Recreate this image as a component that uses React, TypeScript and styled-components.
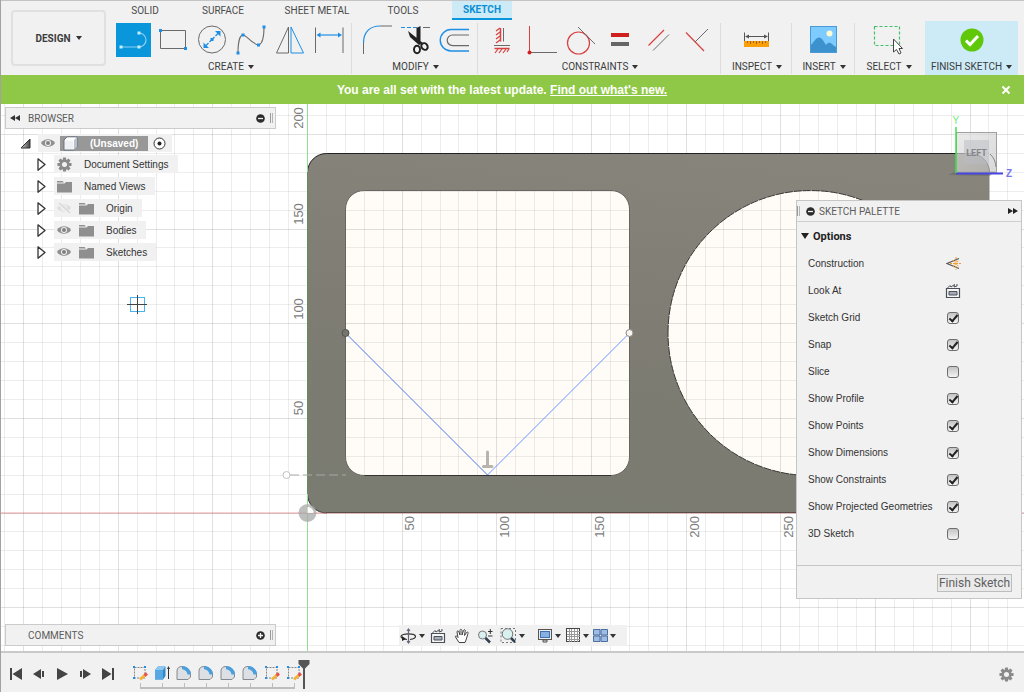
import React from "react";
import styled, { createGlobalStyle, css } from "styled-components";

const ui = `"Liberation Sans", Arial, sans-serif`;
const caps = `Roboto, "Liberation Sans", Arial, sans-serif`;

const GlobalStyle = createGlobalStyle`
  *, *::before, *::after { box-sizing: border-box; }
  html, body { margin: 0; padding: 0; }
  body { font-family: ${ui}; font-size: 10px; color: #3c3c3c; background: #f1f1f1; overflow: hidden; }
  button, input { font: inherit; color: inherit; margin: 0; }
  button { background: none; border: 0; padding: 0; cursor: pointer; }
  svg { display: block; }
`;

const Shell = styled.div`
  display: flex;
  flex-direction: column;
  height: 100vh;
  border-left: 1px solid #a2a2a2;
  overflow: hidden;
`;

/* ---------- ribbon ---------- */

const Ribbon = styled.header`
  display: flex;
  flex: none;
  height: 75px;
  padding-right: 6px;
  border-top: 1px solid #c4c4c4;
  background: #f1f1f1;
  font-family: ${caps};
  font-size: 10px;
`;

const DesignButton = styled.button`
  display: flex;
  align-items: center;
  justify-content: center;
  gap: 5px;
  flex: none;
  width: 95px;
  height: 56px;
  margin: 9px 8px 0 10px;
  border: 2px solid #e0e0e0;
  border-radius: 4px;
  font-weight: bold;
  color: #3c3c3c;
`;

const RibbonBody = styled.div`
  display: flex;
  flex-direction: column;
  flex: 1;
  min-width: 0;
`;

const Tabs = styled.nav`
  display: flex;
  height: 19px;
`;

const Tab = styled.button<{ $width: number; $active?: boolean }>`
  width: ${(p) => p.$width}px;
  flex: none;
  line-height: 20px;
  text-align: center;
  color: #4a4a4a;
  ${(p) =>
    p.$active &&
    css`
      margin-left: 10px;
      background: #cdeaf7;
      color: #0a8fd6;
      font-weight: bold;
      border-bottom: 2px solid #0a96dc;
      line-height: 17px;
    `}
`;

const Groups = styled.div`
  display: flex;
  flex: 1;
`;

const Group = styled.section<{ $width?: number }>`
  display: flex;
  flex-direction: column;
  align-items: center;
  justify-content: space-between;
  flex: none;
  width: ${(p) => (p.$width ? `${p.$width}px` : "auto")};
  margin: 3px 0 1px;
  padding: 0 3px 0 5px;
  border-right: 1px solid #dcdcdc;
  &:first-child {
    padding-left: 0;
  }
  &:last-child {
    border-right: 0;
  }
`;

const Tools = styled.div`
  display: flex;
`;

const Tool = styled.button<{ $active?: boolean }>`
  display: flex;
  align-items: center;
  justify-content: center;
  width: 35px;
  height: 34px;
  margin: 0 2px;
  background: ${(p) => (p.$active ? "#0996db" : "none")};
`;

const GroupLabel = styled.button`
  display: flex;
  align-items: center;
  gap: 4px;
  height: 14px;
  line-height: 14px;
  white-space: nowrap;
  color: #3c3c3c;
`;

const FinishGroup = styled.button`
  display: flex;
  flex-direction: column;
  align-items: center;
  justify-content: space-between;
  flex: none;
  width: 93px;
  margin: 20px 0 0 auto;
  padding: 7px 0 1px;
  background: #cdeaf7;
`;

const CaretShape = styled.span`
  display: inline-block;
  flex: none;
  border: 3px solid transparent;
  border-top: 4px solid #333;
  border-bottom: 0;
`;

const Banner = styled.div`
  display: flex;
  align-items: center;
  justify-content: center;
  flex: none;
  height: 29px;
  padding: 0 13px 0 22px;
  background: #8fc846;
  color: #fff;
  font-size: 12px;
  font-weight: bold;
`;

const BannerText = styled.p`
  flex: 1;
  margin: 0;
  text-align: center;
  padding-right: 20px;
`;

const BannerLink = styled.a`
  color: #fff;
`;

/* ---------- workspace ---------- */

const Workspace = styled.main`
  position: relative;
  flex: 1;
  min-height: 0;
  background: #fff;
  overflow: hidden;
`;

const Drawing = styled.svg`
  position: absolute;
  inset: 0;
  width: 100%;
  height: 100%;
`;

const Dock = styled.div`
  position: absolute;
  left: 4px;
  top: 3px;
  bottom: 5px;
  width: 271px;
  display: flex;
  flex-direction: column;
  justify-content: space-between;
`;

const PanelBar = styled.div`
  display: flex;
  align-items: center;
  height: 22px;
  padding: 0 2px 0 4px;
  border: 1px solid #cbcbcb;
  background: #f1f1f1;
`;

const PanelTitle = styled.h2<{ $indent: number }>`
  flex: 1;
  margin: 0;
  padding-left: ${(p) => p.$indent}px;
  font-family: ${caps};
  font-size: 10px;
  font-weight: normal;
  color: #5c5c5c;
`;

const Grip = styled.span`
  width: 3px;
  height: 10px;
  margin-left: 5px;
  border-left: 1px solid #999;
  border-right: 1px solid #b4b4b4;
`;

const Tree = styled.ul`
  list-style: none;
  margin: 5px 0 0;
  padding: 0;
`;

const TreeItem = styled.li<{ $root?: boolean }>`
  display: flex;
  align-items: center;
  gap: ${(p) => (p.$root ? 7 : 8)}px;
  height: 18px;
  margin-bottom: ${(p) => (p.$root ? 3 : 4)}px;
  padding-left: ${(p) => (p.$root ? 15 : 32)}px;
`;

const TreeBody = styled.div<{ $root?: boolean }>`
  display: flex;
  align-items: center;
  gap: ${(p) => (p.$root ? 5 : 8)}px;
  height: 18px;
  padding: 0 ${(p) => (p.$root ? 6 : 9)}px 0 3px;
  background: #f1f1f1;
`;

const TreeLabel = styled.span`
  margin-left: 4px;
  color: #333;
`;

const RootLabel = styled.span`
  display: flex;
  align-items: center;
  gap: 12px;
  height: 15px;
  width: 88px;
  padding-left: 3px;
  background: #989898;
  color: #fff;
  font-weight: bold;
`;

const Palette = styled.aside`
  position: absolute;
  top: 96px;
  right: 2px;
  width: 226px;
  border: 1px solid #c6c6c6;
  background: #f1f1f1;
`;

const PaletteHead = styled.div`
  display: flex;
  align-items: center;
  height: 21px;
  padding: 0 3px 0 0;
  border-bottom: 1px solid #cfcfcf;
`;

const PaletteGrip = styled(Grip)`
  margin: 0 6px 0 0;
`;

const OptionsTitle = styled.h3`
  display: flex;
  align-items: center;
  gap: 4px;
  height: 28px;
  margin: 0;
  padding-left: 4px;
  font-family: ${caps};
  font-size: 11px;
  color: #222;
`;

const BigCaret = styled.span`
  border: 4px solid transparent;
  border-top: 6px solid #222;
  border-bottom: 0;
`;

const Options = styled.div`
  padding-bottom: 18px;
`;

const OptionRow = styled.label`
  display: flex;
  align-items: center;
  height: 27px;
  padding-left: 11px;
  color: #333;
`;

const OptionName = styled.span`
  width: 136px;
`;

const OptionSlot = styled.span`
  display: flex;
  justify-content: center;
  width: 18px;
`;

const IconButton = styled.button`
  display: flex;
  align-items: center;
  justify-content: center;
`;

const Check = styled.input`
  appearance: none;
  display: grid;
  place-items: center;
  width: 12px;
  height: 12px;
  border: 1px solid #6d6d6d;
  border-radius: 3px;
  background: linear-gradient(#c4c4c4, #f3f3f3);
  &:checked::before {
    content: "";
    width: 5px;
    height: 9px;
    border: solid #222;
    border-width: 0 2px 2px 0;
    transform: rotate(40deg);
  }
`;

const PaletteFoot = styled.div`
  display: flex;
  align-items: center;
  justify-content: flex-end;
  height: 33px;
  padding: 1px 9px 0;
  border-top: 1px solid #c6c6c6;
`;

const FinishButton = styled.button`
  height: 18px;
  width: 75px;
  border: 1px solid #bdbdbd;
  background: #eaeaea;
  color: #5f5f5f;
  font-family: ${caps};
  font-size: 12px;
  line-height: 16px;
  white-space: nowrap;
`;

const NavBar = styled.div`
  position: absolute;
  left: 398px;
  bottom: 5px;
  display: flex;
  align-items: center;
  height: 21px;
  width: 228px;
  padding-left: 1px;
  background: #f1f1f1;
`;

const NavItem = styled.button<{ $width: number }>`
  display: flex;
  align-items: center;
  gap: 2px;
  flex: none;
  width: ${(p) => p.$width}px;
`;

/* ---------- timeline ---------- */

const Timeline = styled.footer`
  display: flex;
  flex: none;
  align-items: center;
  height: 41px;
  padding: 0 10px 0 8px;
  border-top: 2px solid #c9c9c9;
  background: #f1f1f1;
`;

const Playback = styled.div`
  display: flex;
  align-items: center;
  gap: 9px;
  margin: 3px 14px 0 0;
`;

const Features = styled.ol`
  display: flex;
  list-style: none;
  margin: 9px 0 0;
  padding: 0;
`;

const Feature = styled.li`
  display: flex;
  flex-direction: column;
  align-items: center;
  width: 22px;
  & > span {
    width: 100%;
    height: 6px;
    margin-top: 2px;
    background:
      linear-gradient(#bdbdbd, #bdbdbd) center / 1px 100% no-repeat,
      linear-gradient(#bdbdbd, #bdbdbd) bottom / 100% 2px no-repeat;
  }
  &:first-child > span {
    background:
      linear-gradient(#bdbdbd, #bdbdbd) center / 1px 100% no-repeat,
      linear-gradient(#bdbdbd, #bdbdbd) bottom right / 50% 2px no-repeat;
  }
  &:last-child > span {
    background:
      linear-gradient(#bdbdbd, #bdbdbd) center / 1px 100% no-repeat,
      linear-gradient(#bdbdbd, #bdbdbd) bottom left / 50% 2px no-repeat;
  }
`;

const MarkerButton = styled.button`
  margin: 4px 0 0 -7px;
`;

const SettingsButton = styled.button`
  margin: 3px 0 0 auto;
`;

/* ---------- icons ---------- */

const B = "#1e8fe6";
const G = "#6a6a6a";
const R = "#d94040";

const Dot = ({ x, y, c = B }: { x: number; y: number; c?: string }) => (
  <rect x={x - 1.5} y={y - 1.5} width="3" height="3" fill={c} />
);

const Icon34 = ({ children }: { children: React.ReactNode }) => (
  <svg width="34" height="34" viewBox="0 0 34 34" fill="none" aria-hidden="true">
    {children}
  </svg>
);

const LineIcon = () => (
  <Icon34>
    <path d="M4 24H22A7 7 0 0 0 22 10" stroke="#8fd0f2" strokeWidth="1.200" />
    <Dot x={4} y={24} c="#c9ecff" />
    <Dot x={22} y={24} c="#c9ecff" />
    <Dot x={22} y={10} c="#c9ecff" />
  </Icon34>
);
const RectIcon = () => (
  <Icon34>
    <path d="M4.500 7.500H29.500V25.500H4.500Z" stroke={G} />
    <Dot x={4.5} y={7.5} />
    <Dot x={29.5} y={25.5} />
  </Icon34>
);
const CircleIcon = () => (
  <Icon34>
    <circle cx="17" cy="16.500" r="13.500" stroke={G} />
    <path d="M10.500 23 23.500 10" stroke={B} strokeWidth="1.200" />
    <path d="M8.500 25v-5.500l5.500 5.500zM25.500 8v5.500l-5.500-5.500z" fill={B} />
    <path d="M12 17.500l4 4M18 11.500l4 4" stroke="#f1f1f1" strokeWidth="1.500" />
    <Dot x={17} y={16.5} />
  </Icon34>
);
const SplineIcon = () => (
  <Icon34>
    <path d="M4 30C4 19 6 12 9 12C13 12 17 21 25 22C29 20 30 12 30 4" stroke={G} strokeWidth="1.100" />
    <Dot x={4} y={30} />
    <Dot x={9} y={12} />
    <Dot x={24.5} y={22} />
    <Dot x={30} y={4} />
  </Icon34>
);
const MirrorIcon = () => (
  <Icon34>
    <path d="M15.500 4V30H3.500Z" stroke={G} />
    <path d="M18 4V30H30.500Z" stroke={B} />
  </Icon34>
);
const DimensionIcon = () => (
  <Icon34>
    <path d="M3.500 4.500V30M31 4.500V30" stroke={G} />
    <path d="M6 12H28" stroke={B} strokeWidth="1.200" />
    <path d="M4.500 12l4-2.500v5zM30 12l-4-2.500v5z" fill={B} />
  </Icon34>
);
const FilletIcon = () => (
  <Icon34>
    <path d="M3.500 20C3.500 9 10 3 20 3" stroke={B} strokeWidth="1.200" />
    <path d="M3.500 20V31M20 3H32" stroke={G} />
  </Icon34>
);
const TrimIcon = () => (
  <Icon34>
    <path d="M2 4.500H18" stroke={B} strokeDasharray="4 2" />
    <path d="M24 4.500H31" stroke={G} />
    <path d="M17.500 5L21.500 3V22L17.500 18ZM9 8L24 20L20 22L11 14Z" fill="#222" />
    <ellipse cx="18" cy="26.500" rx="3" ry="3.800" stroke="#222" strokeWidth="2" />
    <ellipse cx="25.500" cy="23.500" rx="3" ry="3.500" stroke="#222" strokeWidth="2" transform="rotate(-40 25.500 23.500)" />
  </Icon34>
);
const OffsetIcon = () => (
  <Icon34>
    <path d="M31 6.500H13A10 10 0 0 0 13 28H31" stroke={B} strokeWidth="1.400" />
    <path d="M31 12H14.500A5.300 5.300 0 0 0 14.500 22.600H31" stroke={G} strokeWidth="1.200" />
  </Icon34>
);
const FixIcon = () => (
  <Icon34>
    <path d="M14.500 5V18.500" stroke={R} strokeWidth="1.500" />
    <path d="M10 8l4-3M10 12l4-3M10 16l4-3M10 20l4-3" stroke={R} strokeWidth="1.200" />
    <path d="M17.500 5V18.500" stroke={G} />
    <path d="M8 22.500H24" stroke={G} />
    <path d="M8.500 25.500H23.500" stroke={R} strokeWidth="1.500" />
    <path d="M9 30l3-4M13 30l3-4M17 30l3-4M21 29l2-3" stroke={R} strokeWidth="1.200" />
  </Icon34>
);
const PerpendicularIcon = () => (
  <Icon34>
    <path d="M4.500 3V29" stroke={R} />
    <path d="M4.500 29.500H32" stroke={G} />
    <circle cx="4.500" cy="29.500" r="2" fill="#d32020" />
  </Icon34>
);
const TangentIcon = () => (
  <Icon34>
    <circle cx="14.500" cy="20" r="11" stroke={R} strokeWidth="1.200" />
    <path d="M14 4L31 21" stroke={G} />
  </Icon34>
);
const EqualIcon = () => (
  <Icon34>
    <rect x="8" y="10" width="18" height="4" fill="#d01f1f" />
    <rect x="8" y="19" width="18" height="4" fill="#666" />
  </Icon34>
);
const ParallelIcon = () => (
  <Icon34>
    <path d="M6.500 22.500L22 7" stroke={R} strokeWidth="1.200" />
    <path d="M11 27.500L27 11.500" stroke={G} />
  </Icon34>
);
const MidpointIcon = () => (
  <Icon34>
    <path d="M5 9.500L23 28" stroke={R} strokeWidth="1.200" />
    <path d="M14 19L27 6" stroke={G} />
  </Icon34>
);
const MeasureIcon = () => (
  <Icon34>
    <path d="M4.500 9.500V19M28.500 9.500V19M6 13.500H27" stroke="#555" />
    <path d="M5 13.500l4-2v4zM28 13.500l-4-2v4z" fill="#555" />
    <rect x="4" y="18" width="25" height="6" fill="#fb9f06" />
    <path d="M7.500 18v2M10.500 18v3M13.500 18v2M16.500 18v3M19.500 18v2M22.500 18v3M25.500 18v2" stroke="#9a6410" />
  </Icon34>
);
const ImageIcon = () => (
  <Icon34>
    <rect x="3.500" y="3.500" width="26" height="26" fill="#7dcbff" stroke="#4a9ad6" />
    <path d="M4 22C7 19 9 14.500 12 14.500C15 14.500 17 19 19 22C21 19 23 19.500 25 21C27 23 28 23.500 29 24V29H4Z" fill="#3d91cd" />
    <circle cx="22.500" cy="10.500" r="3" fill="#fdfbd0" />
  </Icon34>
);
const SelectIcon = () => (
  <Icon34>
    <rect x="2.500" y="3.500" width="25" height="19" stroke="#42c06b" strokeDasharray="3 2" strokeWidth="1.200" />
    <path d="M21.500 16V29L24.500 26.500L27 31L29 30L27 25.500H30.500Z" fill="#fff" stroke="#444" />
  </Icon34>
);
const DoneIcon = () => (
  <svg width="24" height="24" viewBox="0 0 24 24" aria-hidden="true">
    <circle cx="12" cy="12" r="11.500" fill="#5fc80a" />
    <path d="M6 12.500l4 4 8-8.500" fill="none" stroke="#fff" strokeWidth="3" />
  </svg>
);

const Rewind = () => (
  <svg width="10" height="8" viewBox="0 0 10 8" aria-hidden="true">
    <path d="M5 1v6L0 4zM10 1v6L5 4z" fill="#333" />
  </svg>
);
const Forward = () => (
  <svg width="10" height="8" viewBox="0 0 10 8" aria-hidden="true">
    <path d="M0 1v6l5-3zM5 1v6l5-3z" fill="#222" />
  </svg>
);
const Disc = ({ plus }: { plus?: boolean }) => (
  <svg width="9" height="9" viewBox="0 0 9 9" aria-hidden="true">
    <circle cx="4.500" cy="4.500" r="4.300" fill="#2c2c2c" />
    <path d={plus ? "M2 4.500H7M4.500 2V7" : "M2 4.500H7"} stroke="#f4f4f4" strokeWidth="1.300" />
  </svg>
);
const Eye = ({ off }: { off?: boolean }) => (
  <svg width="14" height="12" viewBox="0 0 14 12" aria-hidden="true">
    <path d="M0 6C3 1 11 1 14 6C11 11 3 11 0 6Z" fill={off ? "#dedede" : "#8f8f8f"} />
    <circle cx="7" cy="6" r="3" fill="#f1f1f1" />
    <circle cx="7" cy="6" r="2" fill={off ? "#dedede" : "#808080"} />
    {off && <path d="M1 1L12 11" stroke="#f1f1f1" strokeWidth="3" />}
    {off && <path d="M2 1L13 11" stroke="#d6d6d6" strokeWidth="1.200" />}
  </svg>
);
const Folder = () => (
  <svg width="15" height="13" viewBox="0 0 15 13" aria-hidden="true">
    <path d="M0 1H5.500L7 2.500H0ZM0 3.500H7.500L9 2H15V12.500H0Z" fill="#8f8f8f" />
  </svg>
);
const Gear = ({ size = 15 }: { size?: number }) => (
  <svg width={size} height={size} viewBox="0 0 16 16" aria-hidden="true">
    <g fill="#8a8a8a">
      {[0, 45, 90, 135].map((a) => (
        <rect key={a} x="6.300" y="0.500" width="3.400" height="15" rx="0.500" transform={`rotate(${a} 8 8)`} />
      ))}
      <circle cx="8" cy="8" r="5.500" />
    </g>
    <circle cx="8" cy="8" r="2.700" fill="#f1f1f1" />
  </svg>
);
const Twist = () => (
  <svg width="9" height="13" viewBox="0 0 9 13" aria-hidden="true">
    <path d="M1 0.800L8 6.500L1 12.200Z" fill="#fff" stroke="#333" strokeWidth="1.300" strokeLinejoin="round" />
  </svg>
);
const TwistOpen = () => (
  <svg width="11" height="11" viewBox="0 0 11 11" aria-hidden="true">
    <defs>
      <linearGradient id="tw">
        <stop offset="0" stopColor="#ccc" />
        <stop offset="1" stopColor="#444" />
      </linearGradient>
    </defs>
    <path d="M10 1V10H1Z" fill="url(#tw)" stroke="#333" />
  </svg>
);
const Cube = () => (
  <svg width="15" height="15" viewBox="0 0 15 15" aria-hidden="true">
    <path d="M1 4L4 0.800H14V11L11 14H1Z" fill="#fff" stroke="#66707c" />
    <path d="M11 4L14 1V11L11 14Z" fill="#b9c1cc" />
    <path d="M2 4.500H10.500V13H2Z" fill="#eef0f4" />
  </svg>
);
const Radio = () => (
  <svg width="13" height="13" viewBox="0 0 13 13" aria-hidden="true">
    <circle cx="6.500" cy="6.500" r="5.500" fill="#fff" stroke="#333" />
    <circle cx="6.500" cy="6.500" r="2" fill="#222" />
  </svg>
);
const ConstructionIcon = () => (
  <svg width="15" height="15" viewBox="0 0 15 15" fill="none" aria-hidden="true">
    <path d="M13 2.500L1 7.500L13 12.500" stroke="#555" strokeWidth="1.200" />
    <path d="M4 7.500H15M10 1V14M7 4l6 7M7 11l6-7" stroke="#f29a2e" strokeDasharray="2 1" />
  </svg>
);
const LookAtIcon = () => (
  <svg width="16" height="16" viewBox="0 0 16 16" fill="none" aria-hidden="true">
    <path d="M1.500 5.500H14.500V14.500H1.500Z" fill="#f6f6f6" stroke="#4a4f58" strokeWidth="1.200" />
    <path d="M4 8.500H12V12H4Z" fill="#a5adb8" stroke="#4a4f58" />
    <path d="M2.500 5L5 2.500L6 4L9.500 1.500L9 4L12 3V1" stroke="#4a4f58" />
  </svg>
);
const OrbitIcon = () => (
  <svg width="17" height="16" viewBox="0 0 17 16" fill="none" aria-hidden="true">
    <path d="M7 11.500C2 11 1 9.500 1 8.500C1 5 15.500 5 15.500 8.500C15.500 10 13 11 10 11.500" stroke="#333" strokeWidth="1.200" />
    <path d="M8.500 1V15M7 3l1.500-2L10 3M7 13l1.500 2L10 13" stroke="#667" strokeWidth="1.200" />
    <path d="M2 8v5l4-2z" fill="#222" />
  </svg>
);
const HandIcon = () => (
  <svg width="16" height="16" viewBox="0 0 16 16" aria-hidden="true">
    <path
      d="M5 14.500L1.500 9C1 7.500 2.500 7.500 4 9.500L3 4C3 2.500 4.500 2.500 5 4L6 7L6 2.500C6 1 7.700 1 8 2.500V7L9.500 2.500C10 1.200 11.500 1.500 11.200 3L10.500 7.500L12.500 4.500C13.500 3.500 14.500 4.300 14 5.500L12 12L11 14.500Z"
      fill="#fff"
      stroke="#444"
    />
  </svg>
);
const ZoomIcon = () => (
  <svg width="16" height="16" viewBox="0 0 16 16" fill="none" aria-hidden="true">
    <circle cx="5.500" cy="7" r="4" fill="#d9f1f3" stroke="#777" />
    <path d="M8.500 10L13 14.500" stroke="#2f4050" strokeWidth="2.500" />
    <path d="M11 3.500H15.500M13.300 1V6M11 8H15.500" stroke="#333" />
  </svg>
);
const FitIcon = () => (
  <svg width="17" height="17" viewBox="0 0 17 17" fill="none" aria-hidden="true">
    <rect x="1" y="1.500" width="14.500" height="14" stroke="#777" strokeDasharray="2 2" />
    <circle cx="7.500" cy="7" r="5.300" fill="#d9f1ee" stroke="#777" />
    <path d="M11 11L15 15" stroke="#2f4050" strokeWidth="2.500" />
  </svg>
);
const DisplayIcon = () => (
  <svg width="16" height="15" viewBox="0 0 16 15" fill="none" aria-hidden="true">
    <rect x="1.500" y="1.500" width="13" height="10" fill="#eee" stroke="#555" />
    <rect x="3.500" y="3.500" width="9" height="6" fill="#86b0e2" stroke="#3f6fae" />
    <path d="M6 12H10V14H6Z" fill="#ddd" stroke="#555" />
  </svg>
);
const GridIcon = () => (
  <svg width="16" height="15" viewBox="0 0 16 15" fill="none" aria-hidden="true">
    <rect x="1.500" y="0.500" width="13" height="13" fill="#fff" stroke="#444" />
    <path d="M4.500 1V14M6.500 1V14M9.500 1V14M12.500 1V14M2 3.500H15M2 6.500H15M2 8.500H15M2 11.500H15" stroke="#999" />
  </svg>
);
const ViewportsIcon = () => (
  <svg width="15" height="13" viewBox="0 0 15 13" fill="#9dbde6" stroke="#4c6f9f" aria-hidden="true">
    <path d="M.5 .5H7V6H.5ZM8 .5H14.500V6H8ZM.5 7H7V12.500H.5ZM8 7H14.500V12.500H8Z" />
  </svg>
);

const playPaths: [string, string][] = [
  ["To start", "M1 1V13H3V1ZM13 1V13L3.500 7Z"],
  ["Step back", "M9 2V12L1 7ZM10 4h2v6h-2z"],
  ["Play", "M2 1V13L13 7Z"],
  ["Step forward", "M5 2V12L13 7ZM2 4h2v6H2z"],
  ["To end", "M1 1V13L10.500 7ZM11 1V13H13V1Z"],
];

const SketchFeature = () => (
  <svg width="16" height="16" viewBox="0 0 16 16" fill="none" aria-hidden="true">
    <path d="M2.500 2.500H13V13H2.500Z" stroke="#888" strokeDasharray="2 1" />
    <rect x="1" y="1" width="2" height="2" fill={B} />
    <rect x="12" y="1" width="2" height="2" fill={B} />
    <rect x="1" y="12" width="2" height="2" fill={B} />
    <path d="M8 14.500L13 10" stroke="#f3b43c" strokeWidth="3" />
    <path d="M12.500 10.500L15 8.500" stroke="#e8504a" strokeWidth="3" />
  </svg>
);
const ExtrudeFeature = () => (
  <svg width="16" height="16" viewBox="0 0 16 16" aria-hidden="true">
    <path d="M1 5L4 1.500H11.500V11L9 14.500H1Z" fill="#3488c9" />
    <path d="M1 5H9V14.500H1Z" fill="#58a9e3" />
    <path d="M1 5L4 1.500H11.500L9 5Z" fill="#8cc8f0" />
    <path d="M14.500 14V3" stroke="#333" />
    <path d="M13 4l1.500-3L16 4z" fill="#333" />
  </svg>
);
const FilletFeature = () => (
  <svg width="16" height="16" viewBox="0 0 16 16" aria-hidden="true">
    <path d="M1 14.500V6C1 3 3 1.500 6 1.500C11 2 14.500 5 14.500 10V12L12 14.500Z" fill="#dcdfe3" stroke="#868a90" />
    <path d="M6 1C11 1 15 5 15 9.500H11.500C11 6 9 5 6 4Z" fill="#4a9fdd" />
  </svg>
);

/* ---------- sketch canvas ---------- */

const ORIGIN_X = 306.5;
const ORIGIN_Y = 409;
const STEP = 18.93;

function Grid() {
  const lines: React.ReactNode[] = [];
  for (let i = -25; i <= 140; i++) {
    const major = i % 5 === 0;
    const v = Math.round(ORIGIN_X - 0.5 + i * STEP) + 0.5;
    lines.push(<line key={`v${i}`} x1={v} x2={v} y1="0" y2="100%" stroke="#000" strokeOpacity={major ? 0.12 : 0.07} />);
  }
  for (let j = -60; j <= 30; j++) {
    const major = j % 5 === 0;
    const h = Math.round(ORIGIN_Y - 0.5 + j * STEP) + 0.5;
    lines.push(<line key={`h${j}`} y1={h} y2={h} x1="0" x2="100%" stroke="#000" strokeOpacity={major ? 0.12 : 0.07} />);
  }
  return <g>{lines}</g>;
}

const SQUARE = "M363.500 86.500H610A18.500 18.500 0 0 1 628.500 105V353A18.500 18.500 0 0 1 610 371.500H363.500A18.500 18.500 0 0 1 344.500 353V105A18.500 18.500 0 0 1 363.500 86.500Z";
const CIRCLE = "M667 229A142.500 142.500 0 0 1 952 229A142.500 142.500 0 0 1 667 229Z";
const BODY = "M325.500 49.500H969.500A19 19 0 0 1 988.500 68.500V390A19 19 0 0 1 969.500 409H325.500A19 19 0 0 1 306.500 390V68.500A19 19 0 0 1 325.500 49.500Z";

function SketchCanvas() {
  const yLabels: [number, string][] = [[14, "200"], [110, "150"], [205, "100"], [304, "50"]];
  const xLabels: [number, string][] = [[408, "50"], [503, "100"], [598, "150"], [693, "200"], [787, "250"]];
  return (
    <Drawing aria-label="Sketch canvas">
      <defs>
        <linearGradient id="steel" x1="0.600" y1="0" x2="0.400" y2="1">
          <stop offset="0" stopColor="#87847b" />
          <stop offset="0.500" stopColor="#7e7c73" />
          <stop offset="1" stopColor="#7a7b71" />
        </linearGradient>
      </defs>
      <path d={SQUARE} fill="#fffcf7" />
      <path d={CIRCLE} fill="#fffcf7" />
      <Grid />
      <path d={BODY + SQUARE + CIRCLE} fill="url(#steel)" fillRule="evenodd" />
      <path d={SQUARE} fill="none" stroke="#66655f" />
      <path d="M363.500 371.500H610" stroke="#33322e" />
      <path d={CIRCLE} fill="none" stroke="#3a3a36" strokeDasharray="8 1" />
      <path d="M306.500 68.500A19 19 0 0 1 325.500 49.500H969.500A19 19 0 0 1 988.500 68.500" fill="none" stroke="#222" />
      <path d="M306.500 390A19 19 0 0 0 325.500 409" fill="none" stroke="#333" />
      <line x1="0" x2="100%" y1="409" y2="409" stroke="#d86060" strokeOpacity="0.600" />
      <path d="M325 408.500H988" stroke="#5a4c48" />
      <path d="M306.500 0V548" stroke="#8fe08f" />
      <path d="M306.500 68V390" stroke="#5f9058" />
      <g fill="#a8a8a8" fillOpacity="0.750">
        <path d="M306.500 400A9 9 0 1 0 315.500 409H306.500Z" />
        <path d="M306.500 400A9 9 0 0 1 315.500 409H312.500A6 6 0 0 0 306.500 403Z" />
      </g>
      <path d="M306.500 403A6 6 0 0 1 312.500 409H306.500Z" fill="#fff" fillOpacity="0.800" />
      <path d="M289 371H345" stroke="#a9a9a9" strokeDasharray="9 4" />
      <circle cx="285.500" cy="371" r="3.500" fill="#fff" stroke="#c2c2c2" />
      <path d="M344.500 229L486.500 371" stroke="#4a78f2" fill="none" />
      <path d="M486.500 371L628.500 229" stroke="#6b94ff" fill="none" />
      <circle cx="344.500" cy="229" r="3.500" fill="#77756d" stroke="#55544e" />
      <circle cx="628.500" cy="229" r="3.500" fill="#f6f4ef" stroke="#8d8b85" />
      <path d="M486.500 348V362M482.500 362.500H491" stroke="#b7b4ad" strokeWidth="3" strokeLinecap="round" />
      <g fill="none">
        <rect x="129.500" y="193.500" width="14" height="14" stroke="#46b4ee" />
        <path d="M126 200.500H146M136.500 191V210" stroke="#444" />
      </g>
      <g fill="#7d7d7d" fontFamily="Liberation Sans, Arial, sans-serif" fontSize="13" textAnchor="middle">
        {yLabels.map(([y, t]) => (
          <text key={`y${t}`} transform={`translate(302 ${y}) rotate(-90)`}>{t}</text>
        ))}
        {xLabels.map(([x, t]) => (
          <text key={`x${t}`} textAnchor="end" transform={`translate(${x + 5} 412) rotate(-90)`}>{t}</text>
        ))}
      </g>
    </Drawing>
  );
}

const CubeBox = styled.div`
  position: absolute;
  top: 8px;
  right: 4px;
`;

function ViewCube() {
  return (
    <CubeBox>
      <svg width="72" height="72" viewBox="0 0 72 72" aria-label="View cube">
        <defs>
          <linearGradient id="face" x1="0" y1="0" x2="1" y2="1">
            <stop offset="0" stopColor="#e0e0e0" />
            <stop offset="1" stopColor="#c4c4c4" />
          </linearGradient>
        </defs>
        <path d="M0 63L8 59H48L42 64Z" fill="#555" fillOpacity="0.350" />
        <rect x="8.500" y="20.500" width="40" height="40" fill="url(#face)" fillOpacity="0.650" stroke="#a0a0a0" />
        <rect x="16" y="28" width="25" height="24" fill="#b9bbc2" fillOpacity="0.500" />
        <path d="M42 42A19 19 0 0 1 48 55" fill="none" stroke="#888" />
        <path d="M8 61.500H55" stroke="#4747e0" strokeWidth="2" />
        <path d="M8 15V61" stroke="#3fe04a" strokeWidth="1.500" />
        <text x="4.500" y="12" fontSize="10" fontFamily="Liberation Sans, sans-serif" fill="#6fee78">Y</text>
        <text x="58" y="65" fontSize="10" fontWeight="bold" fontFamily="Liberation Sans, sans-serif" fill="#7777ee">Z</text>
        <text x="28.500" y="44" textAnchor="middle" fontSize="9" fontWeight="bold" fontFamily="Roboto, sans-serif" fill="#858589">LEFT</text>
      </svg>
    </CubeBox>
  );
}

/* ---------- data ---------- */

const groups: { label: string; icons: [string, React.FC][]; width?: number }[] = [
  {
    label: "CREATE",
    icons: [["Line", LineIcon], ["Rectangle", RectIcon], ["Circle", CircleIcon], ["Spline", SplineIcon], ["Mirror", MirrorIcon], ["Dimension", DimensionIcon]],
  },
  { label: "MODIFY", icons: [["Fillet", FilletIcon], ["Trim", TrimIcon], ["Offset", OffsetIcon]] },
  {
    label: "CONSTRAINTS",
    icons: [["Fix", FixIcon], ["Perpendicular", PerpendicularIcon], ["Tangent", TangentIcon], ["Equal", EqualIcon], ["Parallel", ParallelIcon], ["Midpoint", MidpointIcon]],
  },
  { label: "INSPECT", icons: [["Measure", MeasureIcon]], width: 71 },
  { label: "INSERT", icons: [["Image", ImageIcon]], width: 63 },
  { label: "SELECT", icons: [["Select", SelectIcon]], width: 66 },
];

const tree: { name: string; eye?: "on" | "off"; gear?: boolean }[] = [
  { name: "Document Settings", gear: true },
  { name: "Named Views" },
  { name: "Origin", eye: "off" },
  { name: "Bodies", eye: "on" },
  { name: "Sketches", eye: "on" },
];

const options: [string, boolean][] = [
  ["Sketch Grid", true],
  ["Snap", true],
  ["Slice", false],
  ["Show Profile", true],
  ["Show Points", true],
  ["Show Dimensions", true],
  ["Show Constraints", true],
  ["Show Projected Geometries", true],
  ["3D Sketch", false],
];

const navItems: [string, React.FC, number, boolean][] = [
  ["Orbit", OrbitIcon, 30, true],
  ["Look at", LookAtIcon, 24, false],
  ["Pan", HandIcon, 23, false],
  ["Zoom", ZoomIcon, 23, false],
  ["Fit", FitIcon, 37, true],
  ["Display settings", DisplayIcon, 28, true],
  ["Grid and snaps", GridIcon, 28, true],
  ["Viewports", ViewportsIcon, 28, true],
];

const features: React.FC[] = [
  SketchFeature, ExtrudeFeature, FilletFeature, FilletFeature,
  FilletFeature, FilletFeature, SketchFeature, SketchFeature,
];

export default function App() {
  return (
    <Shell>
      <GlobalStyle />
      <Ribbon>
        <DesignButton>
          DESIGN <CaretShape />
        </DesignButton>
        <RibbonBody>
          <Tabs>
            <Tab $width={62}>SOLID</Tab>
            <Tab $width={94}>SURFACE</Tab>
            <Tab $width={94}>SHEET METAL</Tab>
            <Tab $width={78}>TOOLS</Tab>
            <Tab $width={60} $active>SKETCH</Tab>
          </Tabs>
          <Groups>
            {groups.map((g, gi) => (
              <Group key={g.label} $width={g.width}>
                <Tools>
                  {g.icons.map(([name, Glyph], i) => (
                    <Tool key={name} aria-label={name} $active={gi === 0 && i === 0}>
                      <Glyph />
                    </Tool>
                  ))}
                </Tools>
                <GroupLabel>
                  {g.label} <CaretShape />
                </GroupLabel>
              </Group>
            ))}
          </Groups>
        </RibbonBody>
        <FinishGroup>
          <DoneIcon />
          <GroupLabel as="span">
            FINISH SKETCH <CaretShape />
          </GroupLabel>
        </FinishGroup>
      </Ribbon>

      <Banner>
        <BannerText>
          You are all set with the latest update. <BannerLink href="#whats-new">Find out what's new.</BannerLink>
        </BannerText>
        <IconButton aria-label="Dismiss">
          <svg width="10" height="10" viewBox="0 0 10 10" aria-hidden="true">
            <path d="M1.500 1.500L8.500 8.500M8.500 1.500L1.500 8.500" stroke="#fff" strokeWidth="2" />
          </svg>
        </IconButton>
      </Banner>

      <Workspace>
        <SketchCanvas />
        <ViewCube />
        <Dock>
          <div>
            <PanelBar>
              <IconButton aria-label="Collapse browser"><Rewind /></IconButton>
              <PanelTitle $indent={8}>BROWSER</PanelTitle>
              <IconButton aria-label="Minimize browser"><Disc /></IconButton>
              <Grip />
            </PanelBar>
            <Tree>
              <TreeItem $root>
                <IconButton aria-label="Collapse document"><TwistOpen /></IconButton>
                <TreeBody $root>
                  <Eye />
                  <RootLabel><Cube />(Unsaved)</RootLabel>
                  <Radio />
                </TreeBody>
              </TreeItem>
              {tree.map((t) => (
                <TreeItem key={t.name}>
                  <IconButton aria-label={`Expand ${t.name}`}><Twist /></IconButton>
                  <TreeBody>
                    {t.eye && <Eye off={t.eye === "off"} />}
                    {t.gear ? <Gear /> : <Folder />}
                    <TreeLabel>{t.name}</TreeLabel>
                  </TreeBody>
                </TreeItem>
              ))}
            </Tree>
          </div>
          <PanelBar>
            <PanelTitle $indent={18}>COMMENTS</PanelTitle>
            <IconButton aria-label="Add comment"><Disc plus /></IconButton>
            <Grip />
          </PanelBar>
        </Dock>

        <NavBar>
          {navItems.map(([name, Glyph, w, caret]) => (
            <NavItem key={name} $width={w} aria-label={name}>
              <Glyph />
              {caret && <CaretShape />}
            </NavItem>
          ))}
        </NavBar>

        <Palette>
          <PaletteHead>
            <PaletteGrip />
            <IconButton aria-label="Minimize palette"><Disc /></IconButton>
            <PanelTitle $indent={4}>SKETCH PALETTE</PanelTitle>
            <IconButton aria-label="Collapse palette"><Forward /></IconButton>
          </PaletteHead>
          <OptionsTitle><BigCaret />Options</OptionsTitle>
          <Options>
            <OptionRow>
              <OptionName>Construction</OptionName>
              <OptionSlot><IconButton><ConstructionIcon /></IconButton></OptionSlot>
            </OptionRow>
            <OptionRow>
              <OptionName>Look At</OptionName>
              <OptionSlot><IconButton><LookAtIcon /></IconButton></OptionSlot>
            </OptionRow>
            {options.map(([name, on]) => (
              <OptionRow key={name}>
                <OptionName>{name}</OptionName>
                <OptionSlot><Check type="checkbox" defaultChecked={on} /></OptionSlot>
              </OptionRow>
            ))}
          </Options>
          <PaletteFoot><FinishButton>Finish Sketch</FinishButton></PaletteFoot>
        </Palette>
      </Workspace>

      <Timeline>
        <Playback>
          {playPaths.map(([name, d]) => (
            <IconButton key={name} aria-label={name}>
              <svg width="14" height="14" viewBox="0 0 14 14" aria-hidden="true"><path d={d} fill="#444" /></svg>
            </IconButton>
          ))}
        </Playback>
        <Features>
          {features.map((Glyph, i) => (
            <Feature key={i}><Glyph /><span /></Feature>
          ))}
        </Features>
        <MarkerButton aria-label="Timeline marker">
          <svg width="12" height="30" viewBox="0 0 12 30" aria-hidden="true">
            <path d="M0.500 0H11.500V4L7 8.500V29H5V8.500L0.500 4Z" fill="#555" />
          </svg>
        </MarkerButton>
        <SettingsButton aria-label="Timeline settings"><Gear size={15} /></SettingsButton>
      </Timeline>
    </Shell>
  );
}
